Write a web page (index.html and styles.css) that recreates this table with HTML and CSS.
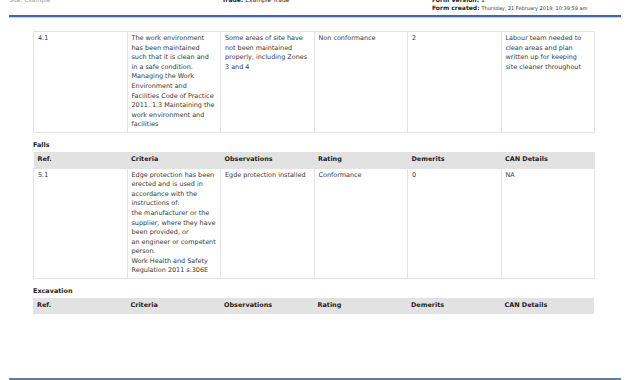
FILE: index.html
```html
<!DOCTYPE html>
<html>
<head>
<meta charset="utf-8">
<link rel="stylesheet" href="styles.css">
</head>
<body>
<div class="page">
  <header class="top">
    <div class="top-col top-left">
      <div class="line muted">Site: Example</div>
    </div>
    <div class="top-col top-mid">
      <div class="line"><b>Trade:</b> Example Trade</div>
    </div>
    <div class="top-col top-right">
      <div class="line"><b>Form Version:</b> 1</div>
      <div class="line"><b>Form created:</b> <span class="date">Thursday, 21 February 2019, 10:39:59 am</span></div>
    </div>
  </header>

  <main class="content">
    <table class="grid first">
      <colgroup><col><col><col><col><col><col></colgroup>
      <tbody>
        <tr>
          <td>4.1</td>
          <td>The work environment has been maintained such that it is clean and in a safe condition. Managing the Work Environment and Facilities Code of Practice 2011. 1.3 Maintaining the work environment and facilities</td>
          <td>Some areas of site have not been maintained properly, including Zones 3 and 4</td>
          <td>Non conformance</td>
          <td>2</td>
          <td>Labour team needed to clean areas and plan written up for keeping site cleaner throughout</td>
        </tr>
      </tbody>
    </table>

    <h2 class="section">Falls</h2>
    <table class="grid">
      <colgroup><col><col><col><col><col><col></colgroup>
      <thead>
        <tr><th>Ref.</th><th>Criteria</th><th>Observations</th><th>Rating</th><th>Demerits</th><th>CAN Details</th></tr>
      </thead>
      <tbody>
        <tr>
          <td>5.1</td>
          <td>Edge protection has been erected and is used in accordance with the instructions of:<br>the manufacturer or the supplier, where they have been provided, or<br>an engineer or competent person.<br>Work Health and Safety Regulation 2011 s.306E</td>
          <td>Egde protection installed</td>
          <td>Conformance</td>
          <td>0</td>
          <td>NA</td>
        </tr>
      </tbody>
    </table>

    <h2 class="section">Excavation</h2>
    <table class="grid">
      <colgroup><col><col><col><col><col><col></colgroup>
      <thead>
        <tr><th>Ref.</th><th>Criteria</th><th>Observations</th><th>Rating</th><th>Demerits</th><th>CAN Details</th></tr>
      </thead>
    </table>
  </main>
  <div class="bottom-rule"></div>
</div>
</body>
</html>
```

FILE: styles.css
```css
html, body {
  margin: 0;
  padding: 0;
  background: #ffffff;
}
body {
  font-family: "DejaVu Sans", Verdana, sans-serif;
  color: #333;
  width: 630px;
  height: 380px;
  overflow: hidden;
}
.page {
  padding: 0 9px;
  height: 380px;
  display: flex;
  flex-direction: column;
}
.top {
  display: flex;
  margin-top: -4px;
  padding-bottom: 3px;
  border-bottom: 2px solid #3b6aa3;
  box-shadow: 0 1px 0 #c4d7ea;
}
.top-col .line {
  font-size: 6px;
  line-height: 8px;
  white-space: nowrap;
  color: #222;
}
.top-left { width: 213px; }
.top-mid { width: 210px; }
.top-right { flex: 1; }
.muted { color: #999 !important; }
.date { font-size: 5px; color: #333; }

.content {
  padding: 14px 24px 0;
  flex: 1;
}
.grid {
  width: 561px;
  border-collapse: collapse;
  table-layout: fixed;
}
.grid col { width: 93.5px; }
.grid td, .grid th {
  font-size: 6.45px;
  line-height: 9.6px;
  text-align: left;
  vertical-align: top;
}
.grid td {
  border: 1px solid #e3e3e3;
  color: #3a3a3a;
  padding: 2px 4px 2px 4px;
}
.grid th {
  background: #e2e2e2;
  font-weight: bold;
  color: #222;
  padding: 3px 4px;
}
.section {
  font-size: 6.45px;
  line-height: 9px;
  font-weight: bold;
  color: #222;
  margin: 8px 0 2px;
}
.bottom-rule {
  height: 2px;
  background: #5a7fa3;
}
```
